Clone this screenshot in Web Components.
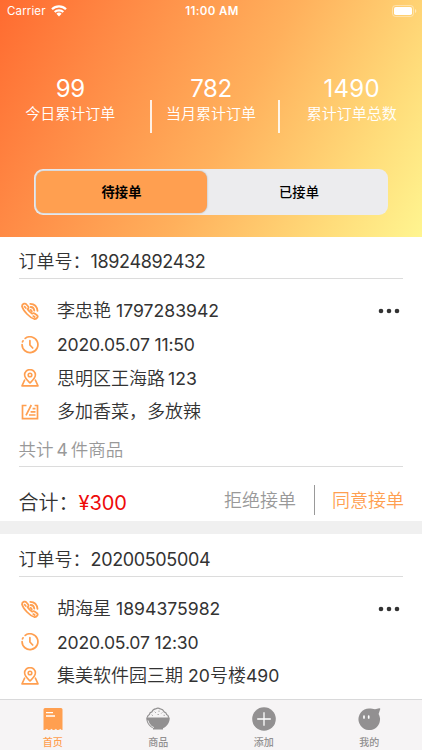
<!DOCTYPE html>
<html lang="zh-CN">
<head>
<meta charset="UTF-8">
<meta name="viewport" content="width=device-width, initial-scale=1">
<title>订单</title>
<style>
    :root {
        --accent: #ff9f50;
        --text: #333;
        --muted: #999;
        --line: #dcdcdc;
    }

    body {
        margin: 0;
        background: #fff;
        color: var(--text);
        font-family: Inter, "Noto Sans CJK SC", sans-serif;
    }
</style>
</head>
<body>
<order-app></order-app>

<script>
const icons = {
    phone: `<g fill="none" stroke="currentColor" stroke-width="1.8" stroke-linejoin="round" stroke-linecap="round">
        <path d="M1 4.200Q1 2.500 3 1.700Q4.500 1.200 5.500 2.500L7.400 4.800Q7.900 6 6.600 7.200Q8.400 9.800 11.200 11.700Q12.500 10.600 13.600 11.500L16 13.300Q17.200 14.300 16.300 15.600Q15.200 17.300 13.300 17Q9.600 15.800 6 12Q1.800 7.500 1 4.200Z"/>
        <path d="m3.600 4.700 1.200 1.300M12.300 14.100l1.400 1M9.700 5q3.300.2 3.600 3.700M9.300 1.800q6.500.3 7.200 7M9.400 7.900q1.200.2 1.400 1.500"/></g>`,
    clock: `<g fill="none" stroke="currentColor" stroke-width="1.700" stroke-linecap="round">
        <path d="M4.200 2.400A7.900 7.900 0 1 1 1.100 8.500M1.500 5.800l.5-1M8.900 4.700V9l2.800 3"/></g>`,
    place: `<g fill="none" stroke="currentColor" stroke-width="1.600" stroke-linejoin="round" stroke-linecap="round">
        <path d="M9 14C6.200 11.200 3.600 9 3.600 6a5.400 5.400 0 0 1 10.800 0c0 3-2.600 5.200-5.400 8Z"/>
        <circle cx="9" cy="6" r="1.800"/>
        <path d="M3.600 11.200 1 16.900h16l-2.600-5.700"/></g>`,
    note: `<g fill="none" stroke="currentColor" stroke-width="1.700">
        <path d="M5.500 2.500H1.500v13.200h15V2.500h-2.900M10.300 2 5 12.300M11.600 5.600h2.900M9.600 8.800h4.900M8 12h6.500"/></g>`,
    home: `<path fill="currentColor" d="M4 1h16q1.500 0 1.500 1.500V23q-1.800 0-2.200-1.200-1.300 1.700-3.200 1.200l-1.200-1.200q-1.200 1.700-3 1.200l-1.400-1.200Q9.200 23.500 7.200 23L6 21.800Q4.500 23.300 2.500 23V2.500Q2.500 1 4 1Z"/>
        <path stroke="#fff" stroke-width="1.300" d="M5 5.600h7M5 9h9"/>`,
    rice: `<path fill="currentColor" d="M.2 10.600h23.600C23.800 15.500 21.300 19.500 17 21.300v1.200H7v-1.200C2.700 19.500.2 15.500.2 10.600Z"/>
        <path fill="none" stroke="#fff" stroke-width=".8" d="M2 13.400c.8 3.600 3 6 6 7.200"/>
        <path fill="none" stroke="currentColor" stroke-width="1.200" d="M1.500 10.700Q1 9 3.400 7.500q.2-2.200 2.500-2.600Q7 2 9.600 1.900 12 .4 14.300 1.900q2.700.2 3.800 2.900Q20.500 5.500 20.600 7.500q2.400 1.200 1.700 3.200"/>
        <path stroke="currentColor" stroke-linecap="round" stroke-width=".9" d="m6 8 .5.400M9 5l.5.500M12 7.500h.4M13 4v.4M16 5.800l-.4.400M18 8.300h.4"/>`,
    add: `<circle cx="12" cy="12" r="11.800" fill="currentColor"/>
        <path stroke="#fff" stroke-width="1.300" d="M12 5.200v13.600M5.200 12h13.600"/>`,
    mine: `<path fill="currentColor" d="M12 1.500c2.400 0 4.300.2 6 .7l4.200-.9c1.200-.1 1.300.5.900 1.300l-1.500 4.300A10.800 10.800 0 1 1 12 1.500Z"/>
        <path stroke="#fff" stroke-width="1.700" stroke-linecap="round" d="M7 9.200v1.700M11.700 9.200v1.700"/>`
};

class StatusBar extends HTMLElement {
    connectedCallback() {
        this.attachShadow({ mode: 'open' });
        this.shadowRoot.innerHTML = `
            <style>
                :host {
                    display: grid;
                    grid-template-columns: 1fr auto 1fr;
                    align-items: center;
                    height: 22px;
                    padding: 0 5px 0 7px;
                    color: #fff;
                    font-size: 11.5px;
                    line-height: 22px;
                }

                .carrier { display: flex; align-items: center; gap: 5px; }
                .name { letter-spacing: 0.14px; }
                .time { font-weight: 600; letter-spacing: 0.4px; }
                .battery { justify-self: end; display: block; }
            </style>
            <div class="carrier">
                <span class="name">Carrier</span>
                <svg width="16" height="12" viewBox="0 0 16 12" fill="none" stroke="#fff" stroke-width="2.200">
                    <path d="M1 4.300a10 10 0 0 1 14 0M3.700 7.100a6 6 0 0 1 8.600 0"/>
                    <path fill="#fff" stroke="none" d="M5.400 8.800a3.700 3.700 0 0 1 5.200 0L8 11.500Z"/>
                </svg>
            </div>
            <span class="time">11:00 AM</span>
            <svg class="battery" width="25" height="12" viewBox="0 0 25 12">
                <rect x=".5" y=".5" width="21" height="11" rx="3" fill="none" stroke="#fff" stroke-opacity=".4"/>
                <rect x="2" y="2" width="18" height="8" rx="1.800" fill="#fff"/>
                <path d="M23 4v4q1.300-.6 1.300-2T23 4Z" fill="#fff" fill-opacity=".5"/>
            </svg>
        `;
    }
}

class StatItem extends HTMLElement {
    connectedCallback() {
        this.attachShadow({ mode: 'open' });
        this.shadowRoot.innerHTML = `
            <style>
                :host {
                    display: block;
                    flex: 1;
                    text-align: center;
                    color: #fff;
                }

                .value { font-size: 24px; line-height: 29px; font-weight: 370; letter-spacing: var(--track, -0.4px); }
                .label { font-size: 15px; line-height: 22px; font-weight: 350; white-space: nowrap; }
            </style>
            <div class="value">${this.getAttribute('value')}</div>
            <div class="label"><slot></slot></div>
        `;
    }
}

class SegmentSwitch extends HTMLElement {
    connectedCallback() {
        this.attachShadow({ mode: 'open' });
        this.shadowRoot.innerHTML = `
            <style>
                :host {
                    display: flex;
                    box-sizing: border-box;
                    height: 46px;
                    margin: 0 34px;
                    padding: 2px;
                    border-radius: 9px;
                    background: #ececee;
                    color: #000;
                    font-size: 13.3px;
                    font-weight: 500;
                    line-height: 42px;
                    text-align: center;
                }

                ::slotted(*) { flex: 1; }
                ::slotted(.active) {
                    flex: 0 0 171px;
                    margin-right: 5px;
                    background: var(--accent);
                    border-radius: 8px;
                    box-shadow: 0 0 2px rgba(0, 0, 0, 0.3);
                    font-weight: 700;
                }
            </style>
            <slot></slot>
        `;
    }
}

class InfoRow extends HTMLElement {
    connectedCallback() {
        this.attachShadow({ mode: 'open' });
        this.shadowRoot.innerHTML = `
            <style>
                :host {
                    display: flex;
                    align-items: center;
                    height: 33.7px;
                    font-size: 18px;
                    line-height: 33px;
                    white-space: nowrap;
                }

                .icon { width: 18px; height: 18px; margin: 0 18px 0 2px; color: var(--accent); }
                .more { margin: 0 1px 0 auto; display: ${this.hasAttribute('more') ? 'block' : 'none'}; }
            </style>
            <svg class="icon" viewBox="0 0 18 18">${icons[this.getAttribute('icon')]}</svg>
            <span><slot></slot></span>
            <svg class="more" width="26" height="6" fill="#333">
                <circle cx="5" cy="3" r="2.300"/><circle cx="13" cy="3" r="2.300"/><circle cx="21" cy="3" r="2.300"/>
            </svg>
        `;
    }
}

class OrderCard extends HTMLElement {
    connectedCallback() {
        const summary = `
            <div class="count">共计<slot name="count"></slot>件商品</div>
            <div class="footer">
                <div class="total">合计：<slot name="total"></slot></div>
                <div class="reject">拒绝接单</div>
                <div class="rule"></div>
                <div class="accept">同意接单</div>
            </div>`;

        this.attachShadow({ mode: 'open' });
        this.shadowRoot.innerHTML = `
            <style>
                :host { display: block; padding: 0 19px; background: #fff; font-weight: 350; }

                .title {
                    height: 41px;
                    border-bottom: 1px solid var(--line);
                    font-size: 18px;
                    line-height: 49px;
                    text-indent: -0.5px;
                    white-space: nowrap;
                }

                ::slotted([slot]) { font-weight: 400; }
                ::slotted([slot="number"]) { letter-spacing: -0.35px; }
                ::slotted([slot="count"]) { padding: 0 3px; }
                ::slotted([slot="total"]) { color: #ee0a0a; letter-spacing: -0.1px; }

                .rows { padding-top: 15px; }
                .count {
                    height: 37px;
                    border-bottom: 1px solid var(--line);
                    color: var(--muted);
                    font-size: 17.5px;
                    line-height: 42px;
                    text-indent: -0.5px;
                }
                .footer {
                    display: flex;
                    align-items: center;
                    height: 54px;
                    margin-right: -1px;
                    font-size: 18px;
                }
                .total { font-size: 20px; margin-right: auto; padding-top: 19px; line-height: 38px; text-indent: -0.5px; }
                .reject { color: var(--muted); padding-top: 11px; }
                .rule { width: 1px; height: 30px; margin: 12px 17px 0 18px; background: #999; }
                .accept { color: var(--accent); padding-top: 11px; }
            </style>
            <div class="title">订单号：<slot name="number"></slot></div>
            <div class="rows"><slot></slot></div>
            ${this.hasAttribute('summary') ? summary : ''}
        `;
    }
}

class TabItem extends HTMLElement {
    connectedCallback() {
        this.attachShadow({ mode: 'open' });
        this.shadowRoot.innerHTML = `
            <style>
                :host {
                    display: flex;
                    flex: 1;
                    flex-direction: column;
                    align-items: center;
                    padding-top: 7px;
                    color: #929091;
                    font-size: 10px;
                    font-weight: 500;
                    line-height: 16px;
                }

                :host([active]) { color: var(--accent); }
                svg { width: 24px; height: 24px; }
                span { margin-top: 3px; }
            </style>
            <svg viewBox="0 0 24 24">${icons[this.getAttribute('icon')]}</svg>
            <span><slot></slot></span>
        `;
    }
}

class OrderApp extends HTMLElement {
    connectedCallback() {
        this.attachShadow({ mode: 'open' });
        this.shadowRoot.innerHTML = `
            <style>
                :host {
                    display: flex;
                    flex-direction: column;
                    height: 750px;
                    overflow: hidden;
                }

                header {
                    flex: none;
                    height: 237px;
                    background: linear-gradient(119deg, #ff6b30 0%, #ff8844 22%, #ffb05c 54%, #ffdc7a 82%, #fff590 100%);
                }

                .stats { display: flex; height: 95px; padding-top: 52px; }
                .split { flex: none; width: 2px; height: 33px; margin: 26px -11px 0 9px; background: rgba(255, 255, 255, 0.85); }
                .split.right { margin: 26px 1px 0 -3px; }
                .wide { --track: 0.3px; }

                .num, .time { font-weight: 400; font-size: 17.6px; }
                .time { letter-spacing: -0.18px; }
                .after { margin-left: 3px; }

                main { flex: 1; min-height: 0; overflow: hidden; }
                .gap { height: 13px; margin-bottom: 1px; background: #f0f0f0; }

                nav {
                    display: flex;
                    flex: none;
                    height: 50px;
                    border-top: 1px solid #d9d9da;
                    background: #f6f4f5;
                }
            </style>
            <header>
                <status-bar></status-bar>
                <div class="stats">
                    <stat-item value="99">今日累计订单</stat-item>
                    <div class="split"></div>
                    <stat-item value="782">当月累计订单</stat-item>
                    <div class="split right"></div>
                    <stat-item class="wide" value="1490">累计订单总数</stat-item>
                </div>
                <segment-switch>
                    <div class="active">待接单</div>
                    <div>已接单</div>
                </segment-switch>
            </header>
            <main>
                <order-card summary>
                    <span slot="number">18924892432</span>
                    <info-row icon="phone" more>李忠艳 <span class="num">1797283942</span></info-row>
                    <info-row icon="clock"><span class="time">2020.05.07 11:50</span></info-row>
                    <info-row icon="place">思明区王海路<span class="num after">123</span></info-row>
                    <info-row icon="note">多加香菜，多放辣</info-row>
                    <span slot="count">4</span>
                    <span slot="total">¥300</span>
                </order-card>
                <div class="gap"></div>
                <order-card>
                    <span slot="number">20200505004</span>
                    <info-row icon="phone" more>胡海星 <span class="num">1894375982</span></info-row>
                    <info-row icon="clock"><span class="time">2020.05.07 12:30</span></info-row>
                    <info-row icon="place">集美软件园三期 <span class="num">20</span>号楼<span class="num">490</span></info-row>
                </order-card>
            </main>
            <nav>
                <tab-item icon="home" active>首页</tab-item>
                <tab-item icon="rice">商品</tab-item>
                <tab-item icon="add">添加</tab-item>
                <tab-item icon="mine">我的</tab-item>
            </nav>
        `;
    }
}

customElements.define('status-bar', StatusBar);
customElements.define('stat-item', StatItem);
customElements.define('segment-switch', SegmentSwitch);
customElements.define('info-row', InfoRow);
customElements.define('order-card', OrderCard);
customElements.define('tab-item', TabItem);
customElements.define('order-app', OrderApp);
</script>
</body>
</html>
